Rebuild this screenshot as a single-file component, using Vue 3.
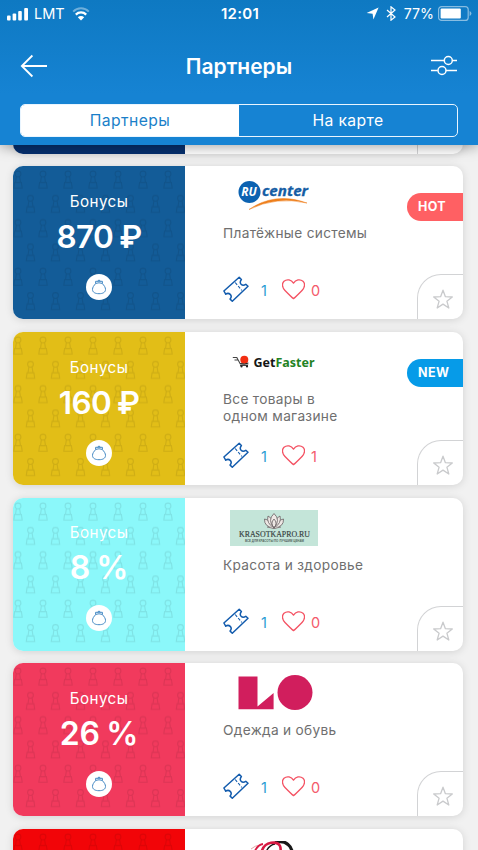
<script setup>
const partners = [
  { id: 0, color: '#06306f' },
  { id: 1, color: '#135c98', amount: '870 ₽', logo: 'ru', category: 'Платёжные системы', likes: 0, tag: 'HOT' },
  { id: 2, color: '#e2be17', amount: '160 ₽', logo: 'faster', category: 'Все товары в\nодном магазине', likes: 1, tag: 'NEW' },
  { id: 3, color: '#8bf8fa', amount: '8 %', logo: 'krasotka', category: 'Красота и здоровье', likes: 0 },
  { id: 4, color: '#f13a5d', amount: '26 %', logo: 'lo', category: 'Одежда и обувь', likes: 0 },
  { id: 5, color: '#f20508', logo: 'rings' },
]
</script>

<template>
  <div class="screen">
    <header class="header">
      <div class="status">
        <div class="status-left">
          <svg class="signal" width="22" height="14" viewBox="0 0 22 14" fill="#fff">
            <rect x="0" y="8.5" width="3.6" height="5" rx="1" />
            <rect x="5.6" y="6.5" width="3.6" height="7" rx="1" />
            <rect x="11.2" y="4" width="3.6" height="9.5" rx="1" />
            <rect x="17.2" y="1" width="3.8" height="12.5" rx="1" />
          </svg>
          <span class="carrier">LMT</span>
          <svg width="18" height="14" viewBox="0 0 18 14" fill="none">
            <path d="M1.200 4.600a11 11 0 0 1 15.600 0" stroke="#fff" stroke-opacity=".4" stroke-width="2" />
            <path d="M3.800 7.600a7.400 7.400 0 0 1 10.400 0" stroke="#fff" stroke-width="2.200" />
            <path d="M9 13.400L5.800 10.200a4.600 4.600 0 0 1 6.400 0z" fill="#fff" />
          </svg>
        </div>
        <span class="clock">12:01</span>
        <div class="status-right">
          <svg width="13" height="13" viewBox="0 0 13 13"><path d="M12.600.4L7.400 12.600 6.600 6.800.6 5.900z" fill="#fff" /></svg>
          <svg class="bt" width="10" height="15" viewBox="0 0 10 15" fill="none" stroke="#fff" stroke-width="1.200">
            <path d="M1 4l8 7-4 3.200V.8L9 4l-8 7" />
          </svg>
          <span class="percent">77%</span>
          <svg class="battery" width="34" height="15" viewBox="0 0 34 15">
            <rect x=".6" y=".6" width="29.600" height="13.800" rx="3" fill="none" stroke="#fff" stroke-opacity=".5" stroke-width="1.200" />
            <rect x="2.600" y="2.500" width="20.200" height="10" rx="1" fill="#fff" />
            <path d="M31.600 5v5q1.800-.7 1.800-2.500T31.600 5z" fill="#fff" fill-opacity=".5" />
          </svg>
        </div>
      </div>
      <div class="nav">
        <svg width="28" height="24" viewBox="0 0 28 24" fill="none" stroke="#fff" stroke-width="1.800">
          <path d="M12.400 1.500L1.800 12l10.600 10.500M2 12h25" />
        </svg>
        <h1 class="title">Партнеры</h1>
        <svg width="28" height="24" viewBox="0 0 28 24" fill="none" stroke="#fff" stroke-width="1.500">
          <path d="M1 6.500h13.200M22.400 6.500H27M1 16.500h6.800M16 16.500h11" />
          <circle cx="18.300" cy="6.500" r="4" />
          <circle cx="12" cy="16.500" r="4" />
        </svg>
      </div>
      <div class="tabs">
        <div class="tab active">Партнеры</div>
        <div class="tab">На карте</div>
      </div>
    </header>

    <main class="list">
      <article v-for="p in partners" :key="p.id" class="card">
        <div class="bonus" :style="{ backgroundColor: p.color }">
          <svg class="pattern" width="172" height="153">
            <defs>
              <pattern :id="'pawns' + p.id" width="25" height="48.600" patternUnits="userSpaceOnUse">
                <g fill="none" stroke="#000" stroke-opacity=".085" stroke-width="1.100">
                  <g>
                    <circle cx="5" cy="8" r="2.900" />
                    <path d="M3.300 11L2.500 16.500h5L6.700 11M1.600 16.500h6.800L9.200 22H.8z" />
                  </g>
                  <g transform="translate(12.500 24.300)">
                    <circle cx="5" cy="8" r="2.900" />
                    <path d="M3.300 11L2.500 16.500h5L6.700 11M1.600 16.500h6.800L9.200 22H.8z" />
                  </g>
                </g>
              </pattern>
            </defs>
            <rect width="172" height="149" :fill="'url(#pawns' + p.id + ')'" />
          </svg>
          <template v-if="p.amount">
            <span class="bonus-label">Бонусы</span>
            <span class="amount" :class="{ rub: p.amount.endsWith('₽') }">{{ p.amount }}</span>
            <span class="purse">
              <svg width="16" height="18" viewBox="0 0 16 18" fill="none" stroke="#4489c4" stroke-width="1">
                <path d="M5 5.300C2.600 7.600 1.500 9.600 1.500 11.400c0 2.900 2.600 4.300 6.500 4.300s6.500-1.400 6.500-4.300c0-1.800-1.100-3.800-3.500-6.100" />
                <path d="M4.600 5.400V3.300h6.800v2.100M4.600 5.400q3.400-1.200 6.800 0M6.600 3q1.400-2 2.800 0" />
              </svg>
            </span>
          </template>
        </div>
        <div class="info">
          <div class="logo" :class="p.logo">
            <svg v-if="p.logo === 'ru'" width="76" height="34" viewBox="0 0 76 34">
              <circle cx="11.500" cy="12" r="11" fill="#0c62b1" />
              <text x="3.300" y="16" class="logo-ru" textLength="15.500" lengthAdjust="spacingAndGlyphs">RU</text>
              <text x="24" y="16" class="logo-center" textLength="46" lengthAdjust="spacingAndGlyphs">center</text>
              <path d="M11 29.500Q37 11.500 69 23 38 16 11 29.500z" fill="#ee7f1c" stroke="#ee7f1c" stroke-width=".5" />
            </svg>
            <svg v-else-if="p.logo === 'faster'" width="84" height="20" viewBox="0 0 84 20">
              <path d="M.8 4.500h4l3.500 6.500h8M2.500 7h4M8 12.500h8" fill="none" stroke="#444" stroke-width="1.100" />
              <circle cx="12.300" cy="6.800" r="4" fill="#f22e12" />
              <path d="M8.300 10.500q4 1.500 8-.5" fill="none" stroke="#222" />
              <circle cx="9.500" cy="13.400" r="1.100" fill="#222" />
              <circle cx="15" cy="13.400" r="1.100" fill="#222" />
              <text x="21.500" y="13.500" class="logo-faster" textLength="61" lengthAdjust="spacingAndGlyphs">Get<tspan fill="#248224">Faster</tspan></text>
            </svg>
            <svg v-else-if="p.logo === 'krasotka'" width="88" height="36" viewBox="0 0 88 36">
              <rect width="88" height="36" fill="#c4e5d9" />
              <g fill="#eee8e5" stroke="#685f62" stroke-width=".8">
                <path d="M44 18Q34 17 34.500 9q6 1 9.500 9zM44 18q10-1 9.500-9-6 1-9.500 9z" />
                <path d="M44 18Q36 13 38 6q6 3 6 12zM44 18q8-5 6-12-6 3-6 12z" />
                <path d="M44 18q-7-8 0-14.500Q51 10 44 18zM44 18q-4-5 0-9 4 4 0 9zM37 17q7 3 14 0" />
              </g>
              <text x="9" y="27" class="logo-kras" textLength="71" lengthAdjust="spacingAndGlyphs">KRASOTKAPRO.RU</text>
              <text x="15" y="31.800" class="logo-sub" textLength="59" lengthAdjust="spacingAndGlyphs">ВСЕ ДЛЯ КРАСОТЫ ПО ЛУЧШИМ ЦЕНАМ</text>
            </svg>
            <svg v-else-if="p.logo === 'lo'" width="76" height="36" viewBox="0 0 76 36" fill="#d11e5d">
              <path d="M.5 1.500h19v30L35.600 18v16.200H.5z" />
              <circle cx="57" cy="17.500" r="17.500" />
            </svg>
            <svg v-else-if="p.logo === 'rings'" width="60" height="30" viewBox="0 0 60 30" fill="none">
              <path d="M0 8Q4 4.500 9 4" stroke="#e09090" stroke-width=".8" />
              <path d="M24 1.500Q32-1 37 3.500q4 3 4.500 10" stroke="#181818" stroke-width="3.200" />
              <path d="M15 11Q18 4 24 3" stroke="#181818" stroke-width="1.400" />
              <path d="M3 12Q6 4 12 3" stroke="#d71942" stroke-width="1.800" />
              <path d="M10 13Q12 3 20 1.800q7-1 9 3.200 1.500 4-.5 8" stroke="#d71942" stroke-width="2.600" />
            </svg>
          </div>
          <template v-if="p.category">
            <p class="category">{{ p.category }}</p>
            <div class="stats">
              <svg width="26" height="27" viewBox="0 0 26 27" fill="none" stroke="#125bad" stroke-width="1.500" stroke-linejoin="round">
                <path d="M.9 15L16.200 1.300l2.200 2.200c-1.600 2-1.400 3.500-.3 4.700 1.200 1.200 2.800 1.300 4.700.1L25 10.300 9.300 25.300l-2.200-2.200c1.500-1.800 1.300-3.500.1-4.700-1.200-1.200-2.800-1.400-4.500-.2z" />
                <path d="M12.200 6.500l6.600 7.800" stroke-dasharray="3 1.600" stroke-width="1.100" />
              </svg>
              <span class="count coupons">1</span>
              <svg class="heart" width="23" height="21" viewBox="0 0 23 21" fill="none" stroke="#f45263" stroke-width="1.300" stroke-linejoin="round">
                <path d="M11.500 19.600Q9.500 18.200 3 11.500C-.3 8-.1 4.200 2 2.300 5-.3 9.300.8 11.500 4.100 13.700.8 18-.3 21 2.300c2.100 1.900 2.300 5.700-1 9.200q-6.500 6.700-8.500 8.100z" />
              </svg>
              <span class="count likes">{{ p.likes }}</span>
            </div>
          </template>
        </div>
        <span v-if="p.tag" class="tag" :class="p.tag.toLowerCase()">{{ p.tag }}</span>
        <span class="favorite">
          <svg width="22" height="21" viewBox="0 0 22 21" fill="none" stroke="#c9cacc" stroke-width="1.300" stroke-linejoin="round">
            <path d="M11 1.200l2.400 6.500 6.900.3-5.400 4.200 1.900 6.800-5.800-3.900L5.200 19l1.900-6.800L1.700 8l6.900-.3z" />
          </svg>
        </span>
      </article>
    </main>
  </div>
</template>

<style>
body {
  margin: 0;
}
</style>

<style scoped>
.screen {
  width: 478px;
  height: 850px;
  overflow: hidden;
  background: #f1f1f1;
  font-family: Inter, "Liberation Sans", sans-serif;
}
.header {
  position: relative;
  z-index: 2;
  box-sizing: border-box;
  height: 145px;
  padding: 0 20px;
  background: linear-gradient(#0e79c2, #1683d3 65%);
  box-shadow: 0 2px 12px rgba(0, 0, 0, .35);
  color: #fff;
}
.status {
  display: grid;
  grid-template-columns: 1fr auto 1fr;
  align-items: center;
  height: 27px;
  margin: 0 -13px;
  font-size: 14.500px;
}
.status-left,
.status-right {
  display: flex;
  align-items: center;
}
.status-right {
  justify-content: flex-end;
  margin-right: -1px;
}
.carrier {
  margin: 0 7px 0 5px;
}
.clock {
  padding-left: 2px;
  font-size: 15px;
  font-weight: 600;
  letter-spacing: .3px;
}
.bt {
  margin: 0 8px 0 7px;
}
.percent {
  font-size: 14.200px;
}
.battery {
  margin-left: 4px;
}
.nav {
  display: flex;
  align-items: center;
  justify-content: space-between;
  height: 77px;
}
.title {
  margin: 1px 0 0;
  font-size: 21px;
  font-weight: 600;
}
.tabs {
  display: grid;
  grid-template-columns: 1fr 1fr;
  box-sizing: border-box;
  height: 33px;
  border: 1.500px solid #e9f5ff;
  border-radius: 5px;
  overflow: hidden;
}
.tab {
  display: flex;
  align-items: center;
  justify-content: center;
  padding-bottom: 1px;
  font-size: 15.700px;
  letter-spacing: .4px;
}
.tab.active {
  background: #fff;
  color: #1a7fc9;
}
.list {
  display: flex;
  flex-direction: column;
  gap: 12.900px;
  margin-top: -144.300px;
  padding: 0 15px 0 13px;
}
.card {
  position: relative;
  display: flex;
  flex: none;
  height: 152.800px;
  border-radius: 10px;
  background: #fff;
  box-shadow: 0 1px 9px rgba(0, 0, 0, .13);
}
.bonus {
  position: relative;
  display: flex;
  flex-direction: column;
  align-items: center;
  width: 172px;
  border-radius: 10px 0 0 10px;
  overflow: hidden;
  color: #fff;
}
.pattern {
  position: absolute;
  inset: 0;
}
.bonus-label {
  position: relative;
  margin-top: 25.500px;
  font-size: 15.200px;
  line-height: 20px;
  letter-spacing: .45px;
}
.amount {
  position: relative;
  margin-top: 5px;
  font-size: 32px;
  font-weight: 600;
  line-height: 40px;
  letter-spacing: -.2px;
  word-spacing: -1.500px;
}
.amount.rub {
  font-size: 31.500px;
  letter-spacing: -.6px;
}
.purse {
  position: relative;
  display: flex;
  align-items: center;
  justify-content: center;
  width: 26px;
  height: 26px;
  margin-top: 17px;
  border-radius: 50%;
  background: #fff;
}
.info {
  display: flex;
  flex-direction: column;
  padding-left: 38px;
}
.logo {
  display: flex;
  align-items: flex-start;
  height: 59px;
  padding: 12px 0 0 7px;
  box-sizing: border-box;
}
.logo.ru {
  padding: 14px 0 0 15px;
}
.logo.faster {
  padding: 21px 0 0 9px;
}
.logo.lo {
  padding-left: 15px;
}
.logo.rings {
  padding: 12px 0 0 28px;
}
.logo svg {
  flex: none;
}
.logo-ru {
  font: italic 700 12px "Open Sans", sans-serif;
  fill: #fff;
}
.logo-center {
  font: italic 700 14.500px "Open Sans", sans-serif;
  fill: #145da4;
  stroke: #145da4;
  stroke-width: .3;
}
.logo-faster {
  font: 700 12.500px "Noto Sans", sans-serif;
  fill: #161616;
}
.logo-kras {
  font: 8.500px "Liberation Serif", serif;
  fill: #353c3c;
  stroke: #353c3c;
  stroke-width: .15;
}
.logo-sub {
  font: 700 3.200px "Liberation Sans", sans-serif;
  fill: #536560;
}
.category {
  height: 50.500px;
  margin: 0;
  color: #6f6f6f;
  font-size: 13.700px;
  line-height: 17px;
  letter-spacing: .3px;
  white-space: pre-line;
}
.stats {
  display: flex;
  align-items: center;
  height: 28px;
}
.count {
  font-size: 14.500px;
}
.coupons {
  width: 9px;
  margin: 2px 12px 0;
  color: #2a9bd3;
}
.likes {
  margin: 2px 0 0 6px;
  color: #f45a6b;
}
.tag {
  position: absolute;
  top: 27px;
  right: 0;
  box-sizing: border-box;
  width: 56px;
  height: 28px;
  padding-left: 11px;
  border-radius: 14px 0 0 14px;
  color: #fff;
  font-size: 12.500px;
  font-weight: 700;
  line-height: 28px;
  letter-spacing: .4px;
}
.hot {
  background: #ff6063;
}
.new {
  background: #069be8;
}
.favorite {
  position: absolute;
  right: 0;
  bottom: 0;
  display: flex;
  box-sizing: border-box;
  width: 46px;
  height: 45px;
  padding: 14px 0 0 14px;
  border: solid #d2d3d5;
  border-width: 1px 0 0 1px;
  border-radius: 24px 0 10px 0;
}
</style>
